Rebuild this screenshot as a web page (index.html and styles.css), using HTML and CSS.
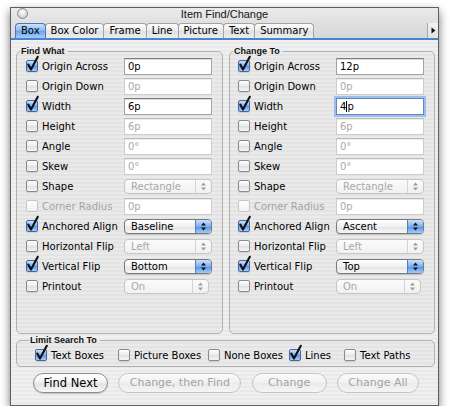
FILE: index.html
```html
<!DOCTYPE html>
<html>
<head>
<meta charset="utf-8">
<title>Item Find/Change</title>
<link rel="stylesheet" href="styles.css">
</head>
<body>
<div class="window">
  <div class="titlebar">
    <span class="close"></span>
    <span class="title">Item Find/Change</span>
    <span></span>
  </div>
  <div class="tabbar">
    <span class="tab sel">Box</span>
    <span class="tab">Box Color</span>
    <span class="tab">Frame</span>
    <span class="tab">Line</span>
    <span class="tab">Picture</span>
    <span class="tab">Text</span>
    <span class="tab">Summary</span>
    <span class="tabscroll"><svg width="5" height="7" viewBox="0 0 5 7"><path d="M0.5 0.5 L4.5 3.5 L0.5 6.5 Z" fill="#111"/></svg></span>
  </div>
  <div class="content">
    <div class="panels">
      <fieldset class="group panel">
        <legend>Find What</legend>
        <div class="row"><span class="cb on"><svg viewBox="0 0 15 17"><path d="M2.3 9.5 L5 14.6 L11.8 1.8" /></svg></span><span class="lbl">Origin Across</span><span class="field">0p</span></div>
        <div class="row"><span class="cb"></span><span class="lbl">Origin Down</span><span class="field off">0p</span></div>
        <div class="row"><span class="cb on"><svg viewBox="0 0 15 17"><path d="M2.3 9.5 L5 14.6 L11.8 1.8" /></svg></span><span class="lbl">Width</span><span class="field">6p</span></div>
        <div class="row"><span class="cb"></span><span class="lbl">Height</span><span class="field off">6p</span></div>
        <div class="row"><span class="cb"></span><span class="lbl">Angle</span><span class="field off">0°</span></div>
        <div class="row"><span class="cb"></span><span class="lbl">Skew</span><span class="field off">0°</span></div>
        <div class="row"><span class="cb"></span><span class="lbl">Shape</span><span class="popup off"><span class="ptext">Rectangle</span><span class="arr"><svg width="5" height="9" viewBox="0 0 5 9"><path d="M0 3.6 L2.5 0.4 L5 3.6 Z M0 5.4 L2.5 8.6 L5 5.4 Z"/></svg></span></span></div>
        <div class="row dim"><span class="cb"></span><span class="lbl">Corner Radius</span><span class="field off">0p</span></div>
        <div class="row"><span class="cb on"><svg viewBox="0 0 15 17"><path d="M2.3 9.5 L5 14.6 L11.8 1.8" /></svg></span><span class="lbl">Anchored Align</span><span class="popup"><span class="ptext">Baseline</span><span class="arr"><svg width="5" height="9" viewBox="0 0 5 9"><path d="M0 3.6 L2.5 0.4 L5 3.6 Z M0 5.4 L2.5 8.6 L5 5.4 Z"/></svg></span></span></div>
        <div class="row"><span class="cb"></span><span class="lbl">Horizontal Flip</span><span class="popup off"><span class="ptext">Left</span><span class="arr"><svg width="5" height="9" viewBox="0 0 5 9"><path d="M0 3.6 L2.5 0.4 L5 3.6 Z M0 5.4 L2.5 8.6 L5 5.4 Z"/></svg></span></span></div>
        <div class="row"><span class="cb on"><svg viewBox="0 0 15 17"><path d="M2.3 9.5 L5 14.6 L11.8 1.8" /></svg></span><span class="lbl">Vertical Flip</span><span class="popup"><span class="ptext">Bottom</span><span class="arr"><svg width="5" height="9" viewBox="0 0 5 9"><path d="M0 3.6 L2.5 0.4 L5 3.6 Z M0 5.4 L2.5 8.6 L5 5.4 Z"/></svg></span></span></div>
        <div class="row"><span class="cb"></span><span class="lbl">Printout</span><span class="popup off short"><span class="ptext">On</span><span class="arr"><svg width="5" height="9" viewBox="0 0 5 9"><path d="M0 3.6 L2.5 0.4 L5 3.6 Z M0 5.4 L2.5 8.6 L5 5.4 Z"/></svg></span></span></div>
      </fieldset>
      <fieldset class="group panel right">
        <legend>Change To</legend>
        <div class="row"><span class="cb on"><svg viewBox="0 0 15 17"><path d="M2.3 9.5 L5 14.6 L11.8 1.8" /></svg></span><span class="lbl">Origin Across</span><span class="field">12p</span></div>
        <div class="row"><span class="cb"></span><span class="lbl">Origin Down</span><span class="field off">0p</span></div>
        <div class="row"><span class="cb on"><svg viewBox="0 0 15 17"><path d="M2.3 9.5 L5 14.6 L11.8 1.8" /></svg></span><span class="lbl">Width</span><span class="field focus">4<span class="caret"></span>p</span></div>
        <div class="row"><span class="cb"></span><span class="lbl">Height</span><span class="field off">6p</span></div>
        <div class="row"><span class="cb"></span><span class="lbl">Angle</span><span class="field off">0°</span></div>
        <div class="row"><span class="cb"></span><span class="lbl">Skew</span><span class="field off">0°</span></div>
        <div class="row"><span class="cb"></span><span class="lbl">Shape</span><span class="popup off"><span class="ptext">Rectangle</span><span class="arr"><svg width="5" height="9" viewBox="0 0 5 9"><path d="M0 3.6 L2.5 0.4 L5 3.6 Z M0 5.4 L2.5 8.6 L5 5.4 Z"/></svg></span></span></div>
        <div class="row dim"><span class="cb"></span><span class="lbl">Corner Radius</span><span class="field off">0p</span></div>
        <div class="row"><span class="cb on"><svg viewBox="0 0 15 17"><path d="M2.3 9.5 L5 14.6 L11.8 1.8" /></svg></span><span class="lbl">Anchored Align</span><span class="popup"><span class="ptext">Ascent</span><span class="arr"><svg width="5" height="9" viewBox="0 0 5 9"><path d="M0 3.6 L2.5 0.4 L5 3.6 Z M0 5.4 L2.5 8.6 L5 5.4 Z"/></svg></span></span></div>
        <div class="row"><span class="cb"></span><span class="lbl">Horizontal Flip</span><span class="popup off"><span class="ptext">Left</span><span class="arr"><svg width="5" height="9" viewBox="0 0 5 9"><path d="M0 3.6 L2.5 0.4 L5 3.6 Z M0 5.4 L2.5 8.6 L5 5.4 Z"/></svg></span></span></div>
        <div class="row"><span class="cb on"><svg viewBox="0 0 15 17"><path d="M2.3 9.5 L5 14.6 L11.8 1.8" /></svg></span><span class="lbl">Vertical Flip</span><span class="popup"><span class="ptext">Top</span><span class="arr"><svg width="5" height="9" viewBox="0 0 5 9"><path d="M0 3.6 L2.5 0.4 L5 3.6 Z M0 5.4 L2.5 8.6 L5 5.4 Z"/></svg></span></span></div>
        <div class="row"><span class="cb"></span><span class="lbl">Printout</span><span class="popup off short"><span class="ptext">On</span><span class="arr"><svg width="5" height="9" viewBox="0 0 5 9"><path d="M0 3.6 L2.5 0.4 L5 3.6 Z M0 5.4 L2.5 8.6 L5 5.4 Z"/></svg></span></span></div>
      </fieldset>
    </div>
    <fieldset class="group limit">
      <legend>Limit Search To</legend>
      <div class="limitrow">
        <span class="opt"><span class="cb on"><svg viewBox="0 0 15 17"><path d="M2.3 9.5 L5 14.6 L11.8 1.8" /></svg></span>Text Boxes</span>
        <span class="opt"><span class="cb"></span>Picture Boxes</span>
        <span class="opt"><span class="cb"></span>None Boxes</span>
        <span class="opt"><span class="cb on"><svg viewBox="0 0 15 17"><path d="M2.3 9.5 L5 14.6 L11.8 1.8" /></svg></span>Lines</span>
        <span class="opt"><span class="cb"></span>Text Paths</span>
      </div>
    </fieldset>
    <div class="buttons">
      <button class="btn find">Find Next</button>
      <button class="btn off cthen">Change, then Find</button>
      <button class="btn off change">Change</button>
      <button class="btn off all">Change All</button>
    </div>
  </div>
</div>
</body>
</html>
```
FILE: styles.css
```css
* { box-sizing: border-box; }
html, body { margin: 0; background: #fff; }
body {
  font-family: "DejaVu Sans", "Liberation Sans", sans-serif;
  font-size: 10px;
  color: #000;
}
.window {
  margin: 7px 0 0 10px;
  width: 429px;
  height: 399px;
  border: 1px solid #5f5f5f;
  box-shadow: 0 4px 9px rgba(0,0,0,.55);
  background: repeating-linear-gradient(#f0f0f0 0 2px, #e9e9e9 2px 4px);
  display: flex;
  flex-direction: column;
}
.titlebar {
  height: 15px;
  flex: none;
  display: grid;
  grid-template-columns: 1fr auto 1fr;
  align-items: start;
  padding: 0 6px;
  background: linear-gradient(#eaeaea, #e0e0e0);
}
.close {
  width: 11px;
  height: 11px;
  border-radius: 50%;
  border: 1px solid #8a8a8a;
  background: radial-gradient(circle at 50% 35%, #ffffff 0, #dcdcdc 55%, #b4b4b4 100%);
}
.title {
  font-family: "Liberation Sans", sans-serif;
  font-size: 11px;
  line-height: 13px;
  color: #151515;
}
.tabbar {
  height: 17px;
  flex: none;
  display: flex;
  align-items: flex-end;
  padding-left: 4px;
  border-bottom: 2px solid #4b83d3;
  background: linear-gradient(#e0e0e0, #d8d8d8);
}
.tab {
  height: 15px;
  padding: 0 5px;
  border: 1px solid #a2a2a2;
  border-bottom: 0;
  border-radius: 4px 4px 0 0;
  margin-right: -1px;
  background: linear-gradient(#fdfdfd, #eaeaea 50%, #e0e0e0 51%, #ececec);
  line-height: 14px;
  white-space: nowrap;
}
.tab.sel {
  border-color: #4f77b4;
  background: linear-gradient(#cfe2fa, #86b5f1 50%, #6aa3ee 51%, #a6cdf8);
  position: relative;
}
.tabscroll {
  margin-left: auto;
  width: 11px;
  height: 15px;
  border-left: 1px solid #a8a8a8;
  display: flex;
  align-items: center;
  justify-content: center;
  background: linear-gradient(#f2f2f2, #e2e2e2);
}
.content {
  flex: 1;
  display: flex;
  flex-direction: column;
  padding: 6px 3px 0 5px;
}
.panels {
  display: flex;
  gap: 6px;
}
.group {
  margin: 0;
  min-width: 0;
  border: 1px solid #b2b2b2;
  border-radius: 5px;
  background: rgba(0,0,0,.025);
}
.group legend {
  font-family: "Liberation Sans", sans-serif;
  font-weight: bold;
  font-size: 9px;
  line-height: 10px;
  padding: 0 3px 0 1px;
  margin-left: -6px;
  color: #111;
}
.panel {
  width: 207px;
  flex: none;
  padding: 0 9px 37px 9px;
}
.panel.right {
  width: 206px;
  padding-left: 8px;
}
.panel.right legend { margin-left: -5px; }
.row {
  display: flex;
  align-items: center;
  height: 20px;
}
.cb {
  width: 12px;
  height: 12px;
  flex: none;
  position: relative;
  margin-right: 4px;
  border: 1px solid #8a8a8a;
  border-radius: 2px;
  background: linear-gradient(#ffffff, #ebebeb 50%, #e0e0e0 51%, #f6f6f6);
  box-shadow: 0 1px 1px rgba(0,0,0,.12);
}
.cb.on {
  border-color: #46689f;
  background: linear-gradient(#cde0fa, #7fb0f0 50%, #5b98ea 51%, #a5cef9);
}
.cb svg {
  position: absolute;
  left: -1px;
  top: -6px;
  width: 15px;
  height: 17px;
  overflow: visible;
}
.cb svg path {
  fill: none;
  stroke: #101010;
  stroke-width: 2.1;
  stroke-linecap: round;
  stroke-linejoin: round;
}
.dim .cb {
  border-color: #c6c6c6;
  background: linear-gradient(#fdfdfd, #f2f2f2);
  box-shadow: none;
}
.dim .lbl { color: #a3a3a3; }
.lbl {
  width: 82px;
  flex: none;
  white-space: nowrap;
}
.field {
  width: 88px;
  height: 17px;
  flex: none;
  border: 1px solid #a3a3a3;
  border-top-color: #7e7e7e;
  background: #fff;
  box-shadow: inset 0 1px 0 #dadada;
  padding-left: 3px;
  line-height: 15px;
  white-space: nowrap;
}
.field.off {
  color: #a9a9a9;
  border-color: #cdcdcd;
  border-top-color: #bababa;
  box-shadow: inset 0 1px 0 #ececec;
}
.field.focus {
  border-color: #5f87c3;
  box-shadow: 0 0 0 2px #9dbfe9;
}
.caret {
  display: inline-block;
  width: 1px;
  height: 11px;
  background: #000;
  vertical-align: -2px;
}
.popup {
  width: 88px;
  height: 15px;
  flex: none;
  display: flex;
  border: 1px solid #7a7a7a;
  border-radius: 4px;
  overflow: hidden;
  background: linear-gradient(#ffffff, #f1f1f1 50%, #e4e4e4 51%, #f7f7f7);
  box-shadow: 0 1px 1px rgba(0,0,0,.15);
}
.popup.short { width: 85px; }
.ptext {
  flex: 1;
  padding-left: 6px;
  line-height: 13px;
  white-space: nowrap;
}
.arr {
  width: 16px;
  flex: none;
  display: flex;
  align-items: center;
  justify-content: center;
  border-left: 1px solid #5a7eb6;
  background: linear-gradient(#cde0fa, #7aadf0 50%, #5392e8 51%, #a2ccf9);
}
.arr svg path { fill: #111; }
.popup.off {
  color: #a8a8a8;
  border-color: #c6c6c6;
  background: linear-gradient(#fbfbfb, #f1f1f1);
  box-shadow: none;
}
.popup.off .arr {
  border-left-color: #d4d4d4;
  background: none;
}
.popup.off .arr svg path { fill: #9c9c9c; }
.limit {
  margin-top: 1px;
  padding: 0 0 1px 18px;
}
.limitrow {
  display: grid;
  grid-template-columns: 83px 90px 81px 55px auto;
  height: 20px;
  align-items: center;
}
.opt {
  display: flex;
  align-items: center;
  white-space: nowrap;
}
.buttons {
  display: flex;
  justify-content: space-between;
  margin-top: 6px;
  padding: 0 16px 0 17px;
}
.btn {
  height: 20px;
  margin: 0;
  padding: 0;
  font-family: "DejaVu Sans", sans-serif;
  font-size: 11px;
  line-height: 18px;
  color: #000;
  text-align: center;
  border: 1px solid #8c8c8c;
  border-radius: 10px;
  background: linear-gradient(#ffffff, #f3f3f3 45%, #e3e3e3 55%, #f8f8f8);
  box-shadow: 0 1px 1px rgba(0,0,0,.18);
}
.btn.off {
  color: #a4a4a4;
  border-color: #c4c4c4;
  background: linear-gradient(#fbfbfb, #f0f0f0 50%, #eaeaea 51%, #f5f5f5);
  box-shadow: none;
}
.btn.find { width: 75px; font-size: 11.5px; }
.btn.cthen { width: 123px; }
.btn.change { width: 75px; }
.btn.all { width: 82px; }
```
